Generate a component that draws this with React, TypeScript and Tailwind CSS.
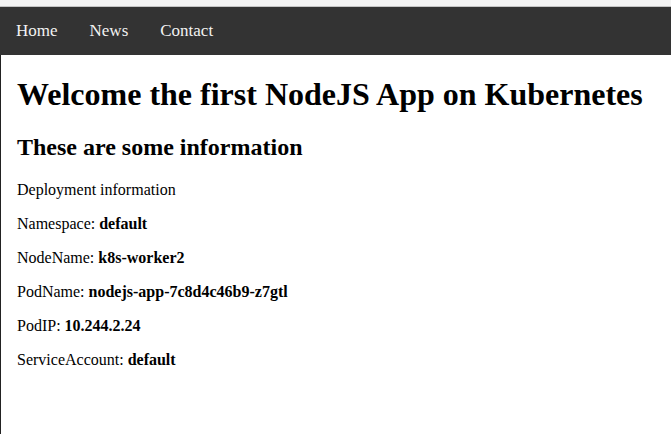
export default function App() {
  return (
    <div className="min-h-[434px] flex flex-col bg-white font-['Liberation_Serif',serif] text-black">
      <div className="h-[7px] bg-[#f3f3f3] border-b border-[#c4c4c4]" />
      <nav className="flex h-[48px] bg-[#333333]">
        {["Home", "News", "Contact"].map((l) => (
          <a key={l} className="flex items-center px-4 text-[17px] text-[#f2f2f2]">
            {l}
          </a>
        ))}
      </nav>
      <div className="flex-1 border-l border-[#222222] px-4">
        <h1 className="text-[32px] font-bold leading-[36px] mt-[21px] mb-[22px]">
          Welcome the first NodeJS App on Kubernetes
        </h1>
        <h2 className="text-[24px] font-bold leading-[27px] mt-[22px] mb-[20px]">
          These are some information
        </h2>
        <p className="text-base leading-[18px] my-4">Deployment information</p>
        <p className="text-base leading-[18px] my-4">
          Namespace: <b>default</b>
        </p>
        <p className="text-base leading-[18px] my-4">
          NodeName: <b>k8s-worker2</b>
        </p>
        <p className="text-base leading-[18px] my-4">
          PodName: <b>nodejs-app-7c8d4c46b9-z7gtl</b>
        </p>
        <p className="text-base leading-[18px] my-4">
          PodIP: <b>10.244.2.24</b>
        </p>
        <p className="text-base leading-[18px] my-4">
          ServiceAccount: <b>default</b>
        </p>
      </div>
    </div>
  );
}
